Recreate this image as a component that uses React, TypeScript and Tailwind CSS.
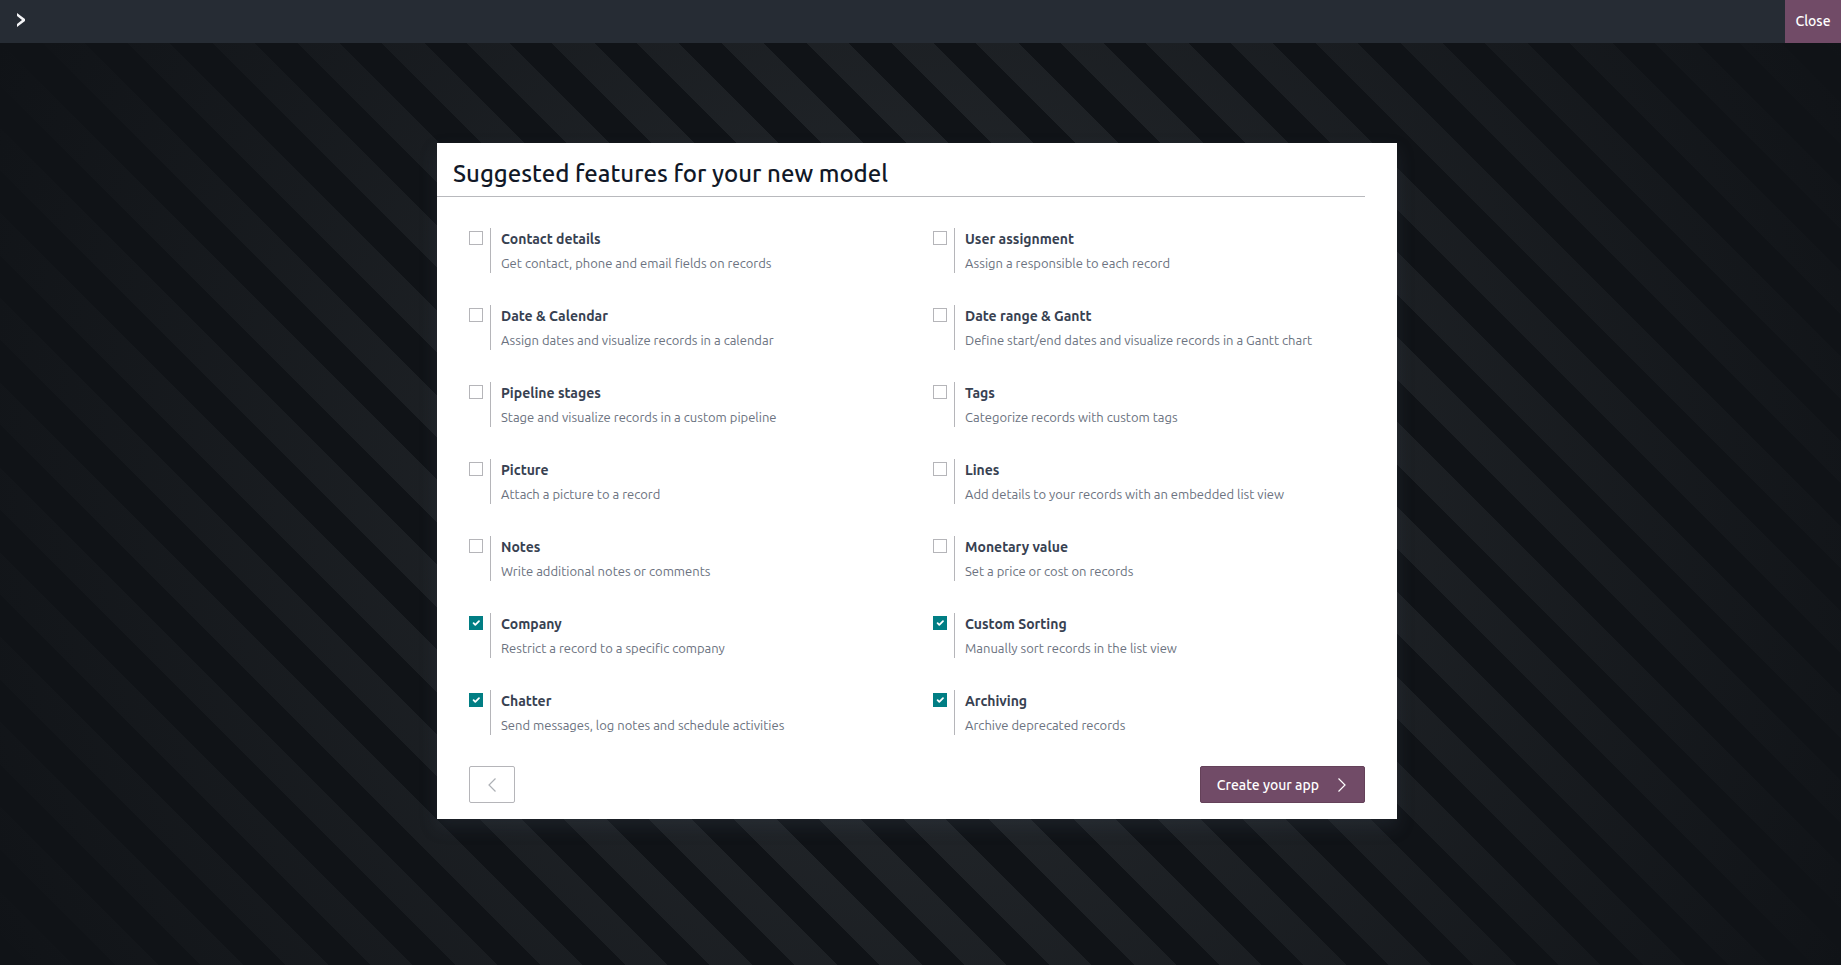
import React, { useState } from "react";

interface Feature {
  id: string;
  title: string;
  description: string;
  checked?: boolean;
}

const FEATURES: Feature[] = [
  { id: "contact", title: "Contact details", description: "Get contact, phone and email fields on records" },
  { id: "user", title: "User assignment", description: "Assign a responsible to each record" },
  { id: "date", title: "Date & Calendar", description: "Assign dates and visualize records in a calendar" },
  { id: "range", title: "Date range & Gantt", description: "Define start/end dates and visualize records in a Gantt chart" },
  { id: "stages", title: "Pipeline stages", description: "Stage and visualize records in a custom pipeline" },
  { id: "tags", title: "Tags", description: "Categorize records with custom tags" },
  { id: "picture", title: "Picture", description: "Attach a picture to a record" },
  { id: "lines", title: "Lines", description: "Add details to your records with an embedded list view" },
  { id: "notes", title: "Notes", description: "Write additional notes or comments" },
  { id: "monetary", title: "Monetary value", description: "Set a price or cost on records" },
  { id: "company", title: "Company", description: "Restrict a record to a specific company", checked: true },
  { id: "sorting", title: "Custom Sorting", description: "Manually sort records in the list view", checked: true },
  { id: "chatter", title: "Chatter", description: "Send messages, log notes and schedule activities", checked: true },
  { id: "archiving", title: "Archiving", description: "Archive deprecated records", checked: true },
];

function FeatureRow({ feature }: { feature: Feature }) {
  const [checked, setChecked] = useState(!!feature.checked);

  return (
    <div className="flex items-start">
      <span className="mt-[3px] grid size-[14px]">
        <input
          id={feature.id}
          type="checkbox"
          checked={checked}
          onChange={(e) => setChecked(e.target.checked)}
          className="col-start-1 row-start-1 size-[14px] appearance-none border border-[#b5b5b9] bg-white checked:border-[#017e84] checked:bg-[#017e84]"
        />
        {checked && (
          <svg
            viewBox="0 0 14 14"
            fill="none"
            stroke="white"
            strokeWidth="1.8"
            strokeLinecap="round"
            strokeLinejoin="round"
            className="pointer-events-none col-start-1 row-start-1 size-[14px]"
            aria-hidden="true"
          >
            <path d="M4.6 7.2 6.3 8.9 10 5.2" />
          </svg>
        )}
      </span>
      <label htmlFor={feature.id} className="ml-[7px] border-l border-[#b5b5b9] pl-[10px]">
        <span className="block text-sm leading-[23px] font-bold text-[#374151]">{feature.title}</span>
        <span className="mt-[3px] block text-[13px] leading-[19px] text-[#6b7280]">{feature.description}</span>
      </label>
    </div>
  );
}

export default function App() {
  return (
    <div className="flex min-h-screen flex-col bg-[#101317] font-['Ubuntu','Noto_Sans',sans-serif]">
      <header className="flex h-[43px] items-stretch justify-between bg-[#262c34]">
        <button type="button" aria-label="Open menu" className="px-[15px] pb-[3px] text-[#f3f4f6]">
          <svg viewBox="0 0 12 16" fill="currentColor" className="h-4 w-3" aria-hidden="true">
            <path d="M2 1 10 7V9L2 15V12L7 8 2 4Z" />
          </svg>
        </button>
        <button type="button" className="min-w-14 bg-[#714b67] px-[10px] pb-[2px] text-sm font-medium text-white">
          Close
        </button>
      </header>

      <main className="flex flex-1 items-start justify-center bg-[radial-gradient(circle_farthest-corner,transparent,#101317),repeating-linear-gradient(45deg,transparent_0_22px,#272b2f_22px_52px,transparent_52px_60px)] pt-[100px] pr-[7px] pb-8">
        <section className="w-full max-w-[960px] bg-white pb-4 shadow-[0_8px_16px_rgba(55,65,81,0.3)]">
          <h1 className="mr-8 border-b border-[#b8b9bd] px-4 pt-[13px] pb-1 text-2xl leading-9 font-medium text-[#111827]">
            Suggested features for your new model
          </h1>
          <form onSubmit={(e) => e.preventDefault()} className="px-8 pt-[31px]">
            <div className="-mr-8 grid grid-cols-2 gap-y-8">
              {FEATURES.map((feature) => (
                <FeatureRow key={feature.id} feature={feature} />
              ))}
            </div>
            <div className="mt-[31px] flex items-center justify-between">
              <button
                type="button"
                aria-label="Previous"
                className="flex h-[37px] w-[46px] items-center justify-center rounded-[2px] border border-[#b5b5b9] text-[#adb0b5]"
              >
                <svg viewBox="0 0 10 16" fill="none" stroke="currentColor" strokeWidth="1.2" className="h-4 w-[10px]" aria-hidden="true">
                  <path d="M8.5 1.5 2 8 8.5 14.5" />
                </svg>
              </button>
              <button
                type="submit"
                className="flex h-[37px] items-center rounded-[2px] border border-[#644159] bg-[#714b67] px-4 text-sm font-medium text-white"
              >
                Create your app
                <svg viewBox="-1 0 12 16" fill="none" stroke="currentColor" strokeWidth="1.2" className="ml-[17px] h-4 w-3" aria-hidden="true">
                  <path d="M1.5 1.5 8 8 1.5 14.5" />
                </svg>
              </button>
            </div>
          </form>
        </section>
      </main>
    </div>
  );
}
